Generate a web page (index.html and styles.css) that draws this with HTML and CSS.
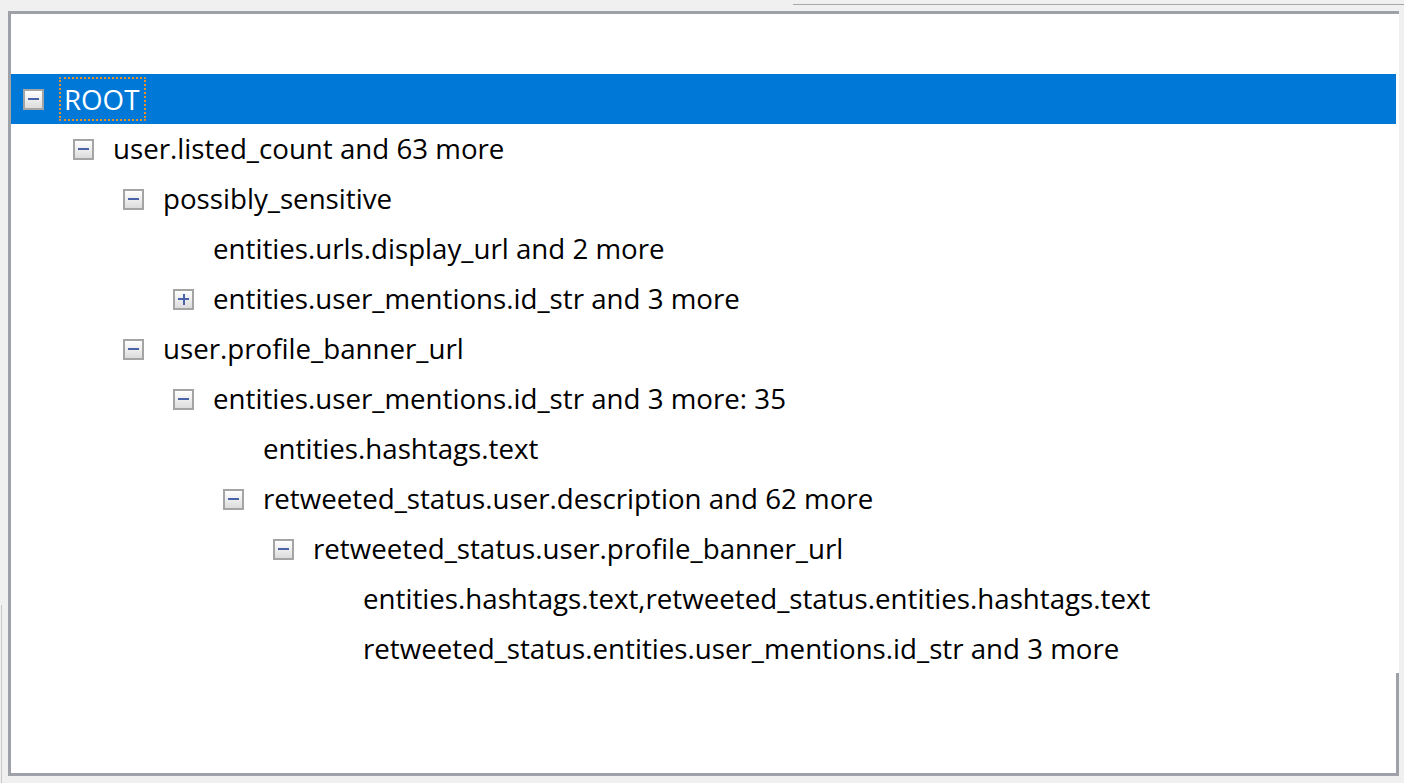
FILE: index.html
```html
<!DOCTYPE html>
<html>
<head>
<meta charset="utf-8">
<link rel="stylesheet" href="styles.css">
</head>
<body>
<div class="topline"></div>
<div class="tree">
  <div class="row l0 selected"><span class="toggle minus"></span><span class="label focus">ROOT</span></div>
  <div class="row l1"><span class="toggle minus"></span><span class="label">user.listed_count and 63 more</span></div>
  <div class="row l2"><span class="toggle minus"></span><span class="label">possibly_sensitive</span></div>
  <div class="row l3"><span class="toggle none"></span><span class="label">entities.urls.display_url and 2 more</span></div>
  <div class="row l3"><span class="toggle plus"></span><span class="label">entities.user_mentions.id_str and 3 more</span></div>
  <div class="row l2"><span class="toggle minus"></span><span class="label">user.profile_banner_url</span></div>
  <div class="row l3"><span class="toggle minus"></span><span class="label">entities.user_mentions.id_str and 3 more: 35</span></div>
  <div class="row l4"><span class="toggle none"></span><span class="label">entities.hashtags.text</span></div>
  <div class="row l4"><span class="toggle minus"></span><span class="label">retweeted_status.user.description and 62 more</span></div>
  <div class="row l5"><span class="toggle minus"></span><span class="label">retweeted_status.user.profile_banner_url</span></div>
  <div class="row l6"><span class="toggle none"></span><span class="label">entities.hashtags.text,retweeted_status.entities.hashtags.text</span></div>
  <div class="row l6"><span class="toggle none"></span><span class="label">retweeted_status.entities.user_mentions.id_str and 3 more</span></div>
</div>
</body>
</html>
```
FILE: styles.css
```css
html, body {
  margin: 0;
  padding: 0;
}
body {
  width: 1404px;
  height: 783px;
  overflow: hidden;
  background: linear-gradient(#c8c8c8, #c8c8c8) 1px 605px / 1px 178px no-repeat, #f0f0f0;
  font-family: "Open Sans", "Noto Sans", sans-serif;
}
.topline {
  height: 1px;
  margin: 4px 0 0 793px;
  background: #a8a8a8;
}
.tree {
  box-sizing: border-box;
  margin: 6px 0 0 8px;
  width: 1391px;
  height: 765px;
  border-top: 3px solid #9ea2a8;
  border-left: 3px solid #9ea2a8;
  border-bottom: 3px solid #9ea2a8;
  padding: 60px 3px 0 0;
  background: linear-gradient(#9ea2a8, #9ea2a8) right bottom / 3px 100px no-repeat, #ffffff;
}
.row {
  display: flex;
  align-items: center;
  height: 50px;
  font-size: 27.7px;
  color: #000;
  white-space: nowrap;
}
.row.selected {
  background: #0078d7;
  color: #fff;
}
.l0 { padding-left: 12px; }
.l1 { padding-left: 62px; }
.l2 { padding-left: 112px; }
.l3 { padding-left: 162px; }
.l4 { padding-left: 212px; }
.l5 { padding-left: 262px; }
.l6 { padding-left: 312px; }
.toggle {
  flex: none;
  box-sizing: border-box;
  width: 21px;
  height: 21px;
  margin-right: 19px;
  position: relative;
}
.toggle.minus, .toggle.plus {
  border: 2px solid #a4a4a4;
  background: linear-gradient(#ffffff, #dcdcdc);
}
.toggle.minus::before, .toggle.plus::before {
  content: "";
  position: absolute;
  left: 3px;
  right: 3px;
  top: 7.5px;
  height: 2px;
  background: #4a63a8;
}
.toggle.plus::after {
  content: "";
  position: absolute;
  top: 3px;
  bottom: 3px;
  left: 7.5px;
  width: 2px;
  background: #4a63a8;
}
.label {
  line-height: 42px;
  margin-top: -3px;
}
.label.focus {
  margin-left: -4px;
  margin-top: -1px;
  padding: 0 5px 0 3px;
  line-height: 40px;
  border: 2px dotted #e8902a;
  border-radius: 2px;
}
```
